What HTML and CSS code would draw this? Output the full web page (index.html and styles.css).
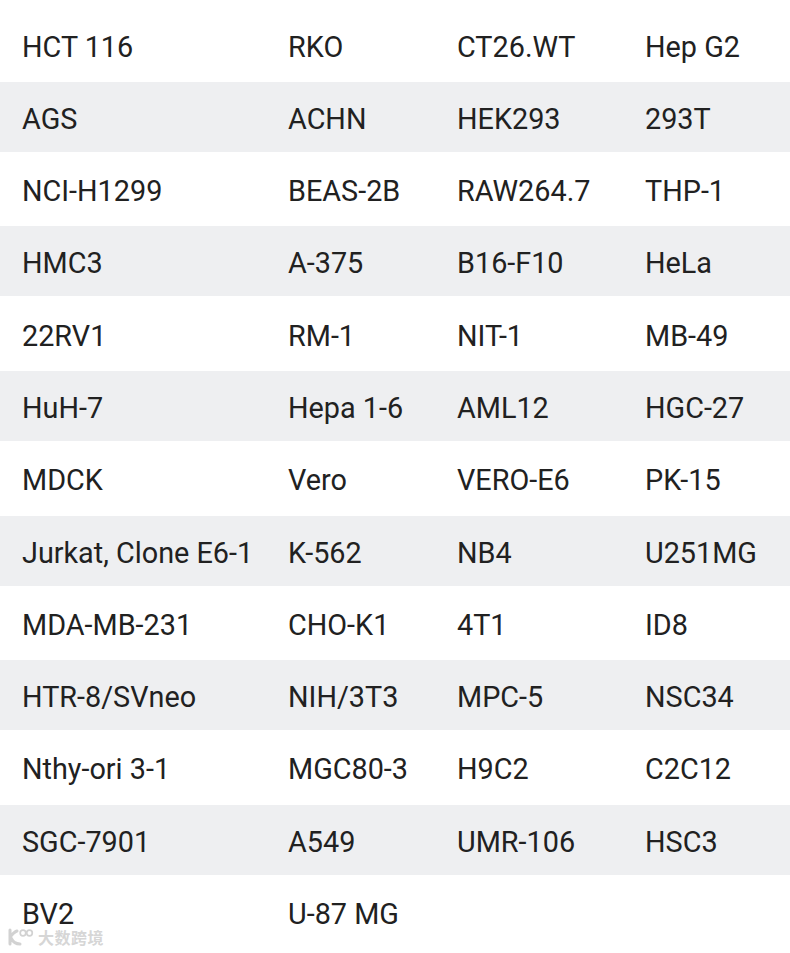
FILE: index.html
```html
<!DOCTYPE html>
<html>
<head>
<meta charset="utf-8">
<link rel="stylesheet" href="styles.css">
</head>
<body>
<div class="table">
  <div class="row"><span>HCT 116</span><span>RKO</span><span>CT26.WT</span><span>Hep G2</span></div>
  <div class="row alt"><span>AGS</span><span>ACHN</span><span>HEK293</span><span>293T</span></div>
  <div class="row"><span>NCI-H1299</span><span>BEAS-2B</span><span>RAW264.7</span><span>THP-1</span></div>
  <div class="row alt"><span>HMC3</span><span>A-375</span><span>B16-F10</span><span>HeLa</span></div>
  <div class="row"><span>22RV1</span><span>RM-1</span><span>NIT-1</span><span>MB-49</span></div>
  <div class="row alt"><span>HuH-7</span><span>Hepa 1-6</span><span>AML12</span><span>HGC-27</span></div>
  <div class="row"><span>MDCK</span><span>Vero</span><span>VERO-E6</span><span>PK-15</span></div>
  <div class="row alt"><span>Jurkat, Clone E6-1</span><span>K-562</span><span>NB4</span><span>U251MG</span></div>
  <div class="row"><span>MDA-MB-231</span><span>CHO-K1</span><span>4T1</span><span>ID8</span></div>
  <div class="row alt"><span>HTR-8/SVneo</span><span>NIH/3T3</span><span>MPC-5</span><span>NSC34</span></div>
  <div class="row"><span>Nthy-ori 3-1</span><span>MGC80-3</span><span>H9C2</span><span>C2C12</span></div>
  <div class="row alt"><span>SGC-7901</span><span>A549</span><span>UMR-106</span><span>HSC3</span></div>
  <div class="row"><span>BV2</span><span>U-87 MG</span><span></span><span></span></div>
</div>
<div class="watermark">
  <svg class="wm-logo" width="29" height="20" viewBox="0 0 29 20">
    <path d="M4 3 L4 17 M4 10 Q8 5 11 4 M5 11 Q8 17 14 17" fill="none" stroke="#d2d2d2" stroke-width="3" stroke-linecap="round"/>
    <circle cx="17" cy="6" r="2.8" fill="none" stroke="#d2d2d2" stroke-width="1.7"/>
    <circle cx="23.5" cy="6" r="2.8" fill="none" stroke="#d2d2d2" stroke-width="1.7"/>
  </svg>
  <span class="wm-text">大数跨境</span>
</div>
</body>
</html>
```
FILE: styles.css
```css
html, body {
  margin: 0;
  padding: 0;
  background: #ffffff;
}
body {
  width: 790px;
  height: 953px;
  overflow: hidden;
  position: relative;
  font-family: Roboto, "Noto Sans", sans-serif;
  color: #212121;
}
.table {
  display: flex;
  flex-direction: column;
  gap: 2.3px;
  padding-top: 9.5px;
}
.row {
  display: grid;
  grid-template-columns: 266px 169px 188px 167px;
  height: 70px;
  align-items: center;
  font-size: 28.8px;
  line-height: 24px;
}
.row span {
  padding-left: 22px;
  padding-top: 4px;
  white-space: nowrap;
}
.row.alt {
  background: #eeeff1;
}
.watermark {
  position: absolute;
  left: 6px;
  top: 927px;
  display: flex;
  align-items: center;
  gap: 3px;
}
.wm-text {
  font-family: "Noto Sans CJK SC", sans-serif;
  font-size: 16px;
  line-height: 18px;
  font-weight: 700;
  color: #d6d6d6;
  letter-spacing: 0.5px;
}
```
